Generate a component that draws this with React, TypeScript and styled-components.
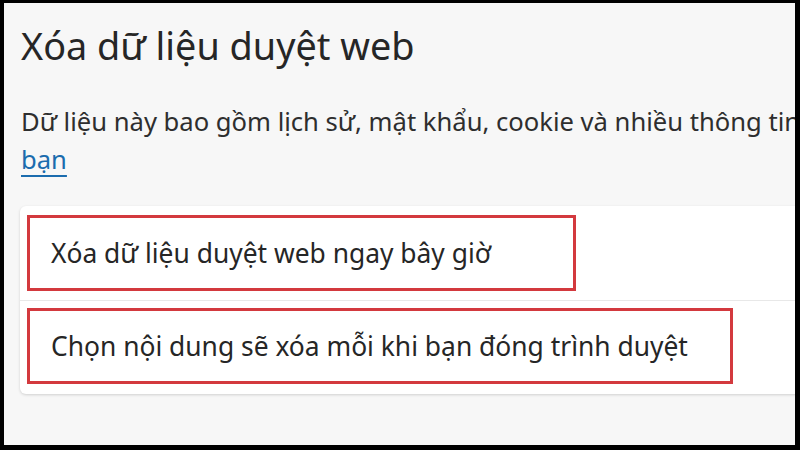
import React from "react";
import styled, { createGlobalStyle } from "styled-components";

const GlobalStyle = createGlobalStyle`
  html, body {
    margin: 0;
    padding: 0;
    background: #000;
    overflow: hidden;
  }
`;

const Frame = styled.div`
  width: 800px;
  height: 450px;
  box-sizing: border-box;
  padding: 3px 5px 5px 4px;
  background: #000;
`;

const Panel = styled.div`
  height: 100%;
  background: #f7f7f7;
  overflow: hidden;
  padding: 19px 0 0 17px;
  box-sizing: border-box;
  font-family: "Noto Sans", "Open Sans", sans-serif;
  color: #262626;
`;

const Title = styled.h1`
  margin: 0;
  font-size: 37.8px;
  font-weight: 400;
  line-height: 48px;
  white-space: nowrap;
`;

const Description = styled.div`
  margin: 33px 0 0;
  font-size: 25.6px;
  line-height: 38px;
  color: #2e2e2e;
`;

const Line = styled.div`
  white-space: nowrap;
`;

const LearnMore = styled.a`
  color: #1b6cae;
  text-decoration: underline;
  text-underline-offset: 6px;
  text-decoration-thickness: 2px;
`;

const Card = styled.div`
  margin-top: 27px;
  margin-left: -1px;
  width: 800px;
  background: #fff;
  border-radius: 6px;
  box-shadow: 0 1px 3px rgba(0, 0, 0, 0.16);
`;

const Row = styled.div<{ $pad: string }>`
  height: 94px;
  box-sizing: border-box;
  padding: ${(p) => p.$pad};
  & + & {
    border-top: 1px solid #e8e8e8;
  }
`;

const Highlight = styled.div<{ $width: number }>`
  width: ${(p) => p.$width}px;
  height: 76px;
  box-sizing: border-box;
  border: 3px solid #d3393e;
  display: flex;
  align-items: center;
  padding-left: 21px;
  font-size: 26.4px;
  color: #262626;
  white-space: nowrap;
`;

export default function App() {
  return (
    <>
      <GlobalStyle />
      <Frame>
        <Panel>
          <Title>Xóa dữ liệu duyệt web</Title>
          <Description>
            <Line>
              Dữ liệu này bao gồm lịch sử, mật khẩu, cookie và nhiều thông tin
            </Line>
            <LearnMore href="#">bạn</LearnMore>
          </Description>
          <Card>
            <Row $pad="9px 0 0 7px">
              <Highlight $width={549}>Xóa dữ liệu duyệt web ngay bây giờ</Highlight>
            </Row>
            <Row $pad="7px 0 0 7px">
              <Highlight $width={706}>
                Chọn nội dung sẽ xóa mỗi khi bạn đóng trình duyệt
              </Highlight>
            </Row>
          </Card>
        </Panel>
      </Frame>
    </>
  );
}
